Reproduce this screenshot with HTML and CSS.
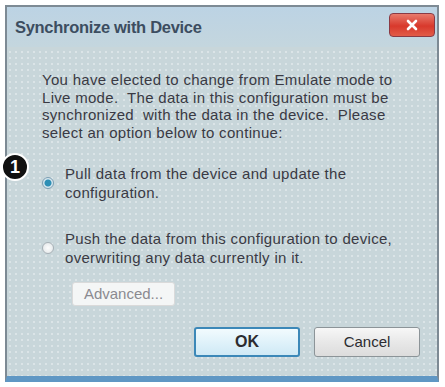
FILE: index.html
```html
<!DOCTYPE html>
<html lang="en">
<head>
    <meta charset="UTF-8">
    <title>Synchronize with Device</title>
    <link rel="stylesheet" href="styles.css">
</head>
<body>
    <main class="dialog">
        <header class="titlebar">
            <h1 class="title">Synchronize with Device</h1>
            <button class="btn-close" aria-label="Close">
                <svg width="14" height="12" viewBox="0 0 14 12">
                    <path d="M3 2 L11 10 M11 2 L3 10" stroke="#fff" stroke-width="2.6" stroke-linecap="round"/>
                </svg>
            </button>
        </header>

        <section class="content">
            <p class="intro">
                You have elected to change from Emulate mode to<br>
                Live mode.&nbsp; The data in this configuration must be<br>
                synchronized&nbsp; with the data in the device.&nbsp; Please<br>
                select an option below to continue:
            </p>

            <div class="options">
                <span class="badge">1</span>
                <label class="option option-first">
                    <span class="radio radio-checked"></span>
                    <span>Pull data from the device and update the<br>configuration.</span>
                </label>
                <label class="option">
                    <span class="radio"></span>
                    <span>Push the data from this configuration to device,<br>overwriting any data currently in it.</span>
                </label>
            </div>

            <button class="btn btn-advanced" disabled>Advanced...</button>

            <div class="actions">
                <button class="btn btn-default">OK</button>
                <button class="btn">Cancel</button>
            </div>
        </section>
    </main>
</body>
</html>
```

FILE: styles.css
```css
*{
    padding: 0;
    margin: 0;
    box-sizing: border-box;
}
body{
    background-color: #fff;
    font-family: "Liberation Sans", Arial, sans-serif;
    color: #3a3a44;
}
.dialog{
    position: relative;
    margin: 5px 0 0 5px;
    width: 434px;
    height: 377px;
    border: 2px solid #7d8a94;
    border-bottom: 6px solid #5f97c4;
    background-color: #c8d6da;
    background-image: radial-gradient(circle, rgba(255,255,255,.35) 0.8px, transparent 1.2px);
    background-size: 6px 6px;
    display: flex;
    flex-direction: column;
}
.titlebar{
    height: 40px;
    display: flex;
    justify-content: space-between;
    align-items: flex-start;
    padding: 10px 2px 0 8px;
    background: linear-gradient(#bcd3e4, #c4d6de);
}
.title{
    font-size: 16.5px;
    font-weight: bold;
    color: #3c4d60;
    letter-spacing: -.3px;
    line-height: 20px;
}
.btn-close{
    width: 46px;
    height: 24px;
    margin-top: -4px;
    border: 1px solid #8a3a44;
    border-radius: 4px;
    background: linear-gradient(#e87a6c, #d8392c 55%, #e25c48);
    display: flex;
    justify-content: center;
    align-items: center;
}
.content{
    flex: 1;
    padding: 24px 0 0 35px;
    font-size: 15px;
    letter-spacing: .3px;
    line-height: 17.7px;
}
.intro{
    margin-bottom: 22px;
}
.options{
    position: relative;
    line-height: 19.5px;
}
.badge{
    position: absolute;
    left: -41px;
    top: -11px;
    width: 28px;
    height: 28px;
    border-radius: 50%;
    background-color: #111;
    border: 2px solid #fff;
    color: #fff;
    font-weight: bold;
    font-size: 18px;
    letter-spacing: 0;
    line-height: 24px;
    text-align: center;
}
.option{
    display: flex;
    align-items: center;
    gap: 11px;
}
.option-first{
    margin-bottom: 26px;
}
.radio{
    flex: none;
    width: 12px;
    height: 12px;
    border-radius: 50%;
    border: 1px solid #a7b0b6;
    background: radial-gradient(#fdfdfd, #dfe4e6);
}
.radio-checked{
    border-color: #7c9fb3;
    background: radial-gradient(circle, #2d8fb5 0 3px, #d6e6ee 4px);
}
.btn{
    width: 106px;
    height: 30px;
    font-family: inherit;
    font-size: 15px;
    color: #2c2c30;
    border: 1px solid #8c9498;
    border-radius: 3px;
    background: linear-gradient(#f7f7f7, #e8e8e8 50%, #dcdcdc);
}
.btn-advanced{
    width: 103px;
    height: 24px;
    margin: 14px 0 0 30px;
    color: #8a8a90;
    border-color: #dadada;
    background: #f4f6f6;
}
.actions{
    display: flex;
    justify-content: flex-end;
    gap: 14px;
    margin: 21px 17px 0 0;
}
.btn-default{
    border: 2px solid #3c88b8;
    background: linear-gradient(#f2fbfe, #e0f2fa 50%, #cfe9f5);
    font-size: 16px;
    font-weight: bold;
}
```
